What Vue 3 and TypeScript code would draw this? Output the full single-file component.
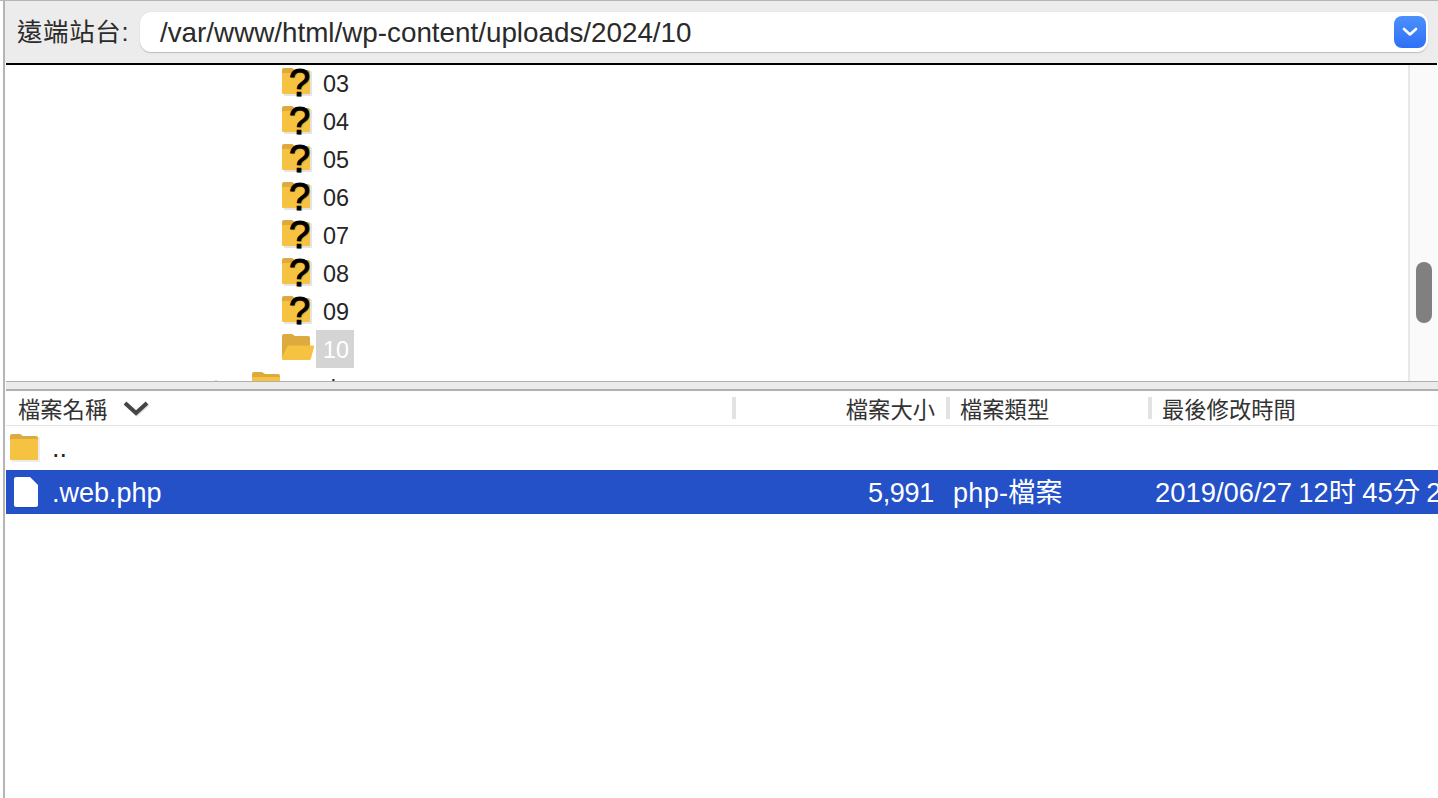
<template>
  <div class="window">
    <div class="toolbar">
      <span class="site-label">遠端站台:</span>
      <div class="path-box">
        <span class="path-text">/var/www/html/wp-content/uploads/2024/10</span>
        <span class="path-btn">
          <svg width="16" height="10" viewBox="0 0 16 10"><path d="M2 2l6 5.500L14 2" fill="none" stroke="#fff" stroke-width="2.600" stroke-linecap="round" stroke-linejoin="round" /></svg>
        </span>
      </div>
    </div>

    <div class="tree">
      <div class="tree-rows">
        <div v-for="name in unknownDirs" :key="name" class="tree-row">
          <span class="folder-wrap">
            <svg class="folder" width="30" height="28" viewBox="0 0 30 28">
              <rect x="2" y="3" width="28" height="25" rx="1.500" fill="#e4e4e4" />
              <path d="M0 2q0-2 2-2h8l3 2h13q2 0 2 2v20q0 2-2 2H2q-2 0-2-2z" fill="#dcaa3e" />
              <path d="M0 6q0-1 1-1h26q1 0 1 1v18q0 2-2 2H2q-2 0-2-2z" fill="#f5c242" />
            </svg>
            <span class="question">?</span>
          </span>
          <span class="tree-label">{{ name }}</span>
        </div>
        <div class="tree-row">
          <svg class="folder" width="33" height="27" viewBox="0 0 33 27">
            <path d="M0 2q0-2 2-2h8l3 2h13q2 0 2 2v20q0 2-2 2H2q-2 0-2-2z" fill="#dcaa3e" />
            <path d="M5 13q.4-1.500 2-1.500h24q1.500 0 1 1.500l-3 11.500q-.5 1.500-2 1.500H2q-2 0-2-2v-1z" fill="#f5c242" />
          </svg>
          <span class="tree-label current">10</span>
        </div>
        <div class="tree-row last">
          <span class="twisty"></span>
          <svg class="folder" width="28" height="26" viewBox="0 0 28 26">
            <path d="M0 2q0-2 2-2h8l3 2h13q2 0 2 2v20q0 2-2 2H2q-2 0-2-2z" fill="#dcaa3e" />
            <path d="M0 6q0-1 1-1h26q1 0 1 1v18q0 2-2 2H2q-2 0-2-2z" fill="#f5c242" />
          </svg>
          <span class="tree-label">rl</span>
        </div>
      </div>
      <div class="scrollbar"><span class="thumb"></span></div>
    </div>

    <div class="sash"></div>

    <div class="list-head">
      <div class="head-cell">
        檔案名稱
        <svg class="sort" width="28" height="18" viewBox="0 0 28 18">
          <path d="M3 4l11 10L25 4" fill="none" stroke="#ddd" stroke-width="4" transform="translate(1 1)" />
          <path d="M3 4l11 10L25 4" fill="none" stroke="#454545" stroke-width="4" />
        </svg>
      </div>
      <div class="head-cell right">檔案大小</div>
      <div class="head-cell">檔案類型</div>
      <div class="head-cell">最後修改時間</div>
    </div>

    <div class="list-row">
      <div class="name-cell">
        <svg width="30" height="28" viewBox="0 0 30 28">
          <rect x="2" y="3" width="28" height="25" rx="1.500" fill="#ececec" />
          <path d="M0 2q0-2 2-2h8l3 2h13q2 0 2 2v20q0 2-2 2H2q-2 0-2-2z" fill="#dcaa3e" />
          <path d="M0 6q0-1 1-1h26q1 0 1 1v18q0 2-2 2H2q-2 0-2-2z" fill="#f5c242" />
        </svg>
        <span class="file-name">..</span>
      </div>
    </div>
    <div class="list-row selected">
      <div class="name-cell">
        <svg class="file-icon" width="26" height="32" viewBox="0 0 26 32">
          <path d="M1 3q0-2 2-2h13l8 8v20q0 2-2 2H3q-2 0-2-2z" fill="#16389a" opacity=".5" />
          <path d="M0 2q0-2 2-2h14l8 8v20q0 2-2 2H2q-2 0-2-2z" fill="#fff" />
        </svg>
        <span class="file-name">.web.php</span>
      </div>
      <div class="size-cell">5,991</div>
      <div class="type-cell">php-檔案</div>
      <div class="date-cell">2019/06/27 12时 45分 24秒</div>
    </div>
  </div>
</template>

<script setup lang="ts">
const unknownDirs: string[] = ['03', '04', '05', '06', '07', '08', '09']
</script>

<style>
html,
body {
  margin: 0;
  background: #fff;
  overflow: hidden;
}
</style>

<style scoped>
.window {
  width: 1438px;
  height: 798px;
  overflow: hidden;
  box-sizing: border-box;
  padding-left: 6px;
  border-top: 1px solid #b5b5b5;
  background: #fff;
  font-family: "Liberation Sans", "Noto Sans CJK TC", sans-serif;
  color: #262626;
  position: relative;
}

.window::before {
  content: "";
  position: absolute;
  left: 3px;
  top: 0;
  bottom: 0;
  width: 2px;
  background: #b5b5b5;
}

.toolbar {
  height: 62px;
  margin-left: -3px;
  padding: 11px 10px 11px 14px;
  box-sizing: border-box;
  display: flex;
  align-items: center;
  background: #ececec;
}

.site-label {
  width: 123px;
  flex: none;
  font-size: 25.500px;
  letter-spacing: 0.6px;
  line-height: 46px;
  white-space: nowrap;
  color: #2b2b2b;
}

.path-box {
  flex: 1;
  height: 40px;
  display: flex;
  align-items: center;
  justify-content: space-between;
  padding: 0 2px 0 20px;
  background: #fff;
  border-radius: 11px;
  box-shadow: 0 1px 1px #bdbdbd, 0 0 1px #d0d0d0;
}

.path-text {
  font-size: 27.800px;
  line-height: 34px;
  padding-top: 2px;
  color: #2a2a2a;
}

.path-btn {
  width: 32px;
  height: 32px;
  display: flex;
  align-items: center;
  justify-content: center;
  border-radius: 8px;
  background: linear-gradient(#4c90fc, #2e70f6);
}

.tree {
  height: 318px;
  display: flex;
  border-top: 2px solid #000;
  box-sizing: border-box;
  overflow: hidden;
  margin-right: 1px;
}

.tree-rows {
  flex: 1;
  margin-top: -1px;
  overflow: hidden;
}

.tree-row {
  height: 38px;
  padding-left: 276px;
  display: flex;
  align-items: flex-start;
  position: relative;
}

.tree-row.last {
  padding-left: 246px;
}

.folder {
  display: block;
  margin-top: 4px;
  flex: none;
}

.folder-wrap {
  position: relative;
  width: 30px;
  height: 38px;
  flex: none;
}

.question {
  position: absolute;
  left: 7px;
  top: 0;
  font-size: 38px;
  line-height: 38px;
  color: #000;
  -webkit-text-stroke: 1px #000;
  text-shadow: 1px 1px 1px rgba(0, 0, 0, 0.25);
}

.tree-label {
  position: absolute;
  left: 310px;
  top: 0;
  width: 38px;
  height: 38px;
  box-sizing: border-box;
  padding: 0 7px;
  line-height: 41px;
  font-size: 23.400px;
}

.tree-label.current {
  background: #d4d4d4;
  color: #fff;
}

.twisty {
  position: absolute;
  left: 207px;
  top: 12px;
  width: 0;
  height: 0;
  border-left: 3px solid transparent;
  border-right: 3px solid transparent;
  border-bottom: 6px solid #555;
}

.scrollbar {
  width: 29px;
  flex: none;
  background: #fafafa;
  border-left: 2px solid #e8e8e8;
  box-sizing: border-box;
  position: relative;
}

.thumb {
  position: absolute;
  left: 6px;
  top: 197px;
  width: 16px;
  height: 61px;
  border-radius: 8px;
  background: #808080;
}

.sash {
  height: 10px;
  box-sizing: border-box;
  background: #ebebeb;
  border-top: 1px solid #b0b0b0;
  border-bottom: 2px solid #b0b0b0;
}

.list-head,
.list-row {
  display: grid;
  grid-template-columns: 726px 214px 202px 1fr;
}

.list-head {
  height: 35px;
  padding-bottom: 1px;
  box-sizing: border-box;
  align-items: center;
  border-bottom: 1px solid #e4e4e4;
  font-size: 22.300px;
  color: #333;
}

.head-cell {
  height: 22px;
  line-height: 26px;
  padding-top: 6px;
  display: flex;
  align-items: center;
  white-space: nowrap;
  box-sizing: border-box;
  border-left: 4px solid #e2e2e2;
  padding-left: 10px;
}

.head-cell:first-child {
  border-left: 0;
  padding-left: 12px;
}

.head-cell.right {
  justify-content: flex-end;
  padding-right: 11px;
}

.sort {
  margin-left: 15px;
  margin-top: -5px;
}

.list-row {
  height: 44px;
  font-size: 27px;
  line-height: 46px;
  align-items: center;
  white-space: nowrap;
}

.list-row.selected {
  background: #2450c8;
  color: #fff;
}

.name-cell {
  display: flex;
  align-items: center;
  padding-left: 4px;
}

.file-icon {
  margin-left: 4px;
}

.file-name {
  position: absolute;
  left: 52px;
}

.size-cell {
  text-align: right;
  padding-right: 12px;
  letter-spacing: -0.3px;
}

.type-cell {
  padding-left: 7px;
  letter-spacing: 0.3px;
}

.date-cell {
  padding-left: 7px;
  font-size: 27.400px;
  word-spacing: -1.500px;
}
</style>
